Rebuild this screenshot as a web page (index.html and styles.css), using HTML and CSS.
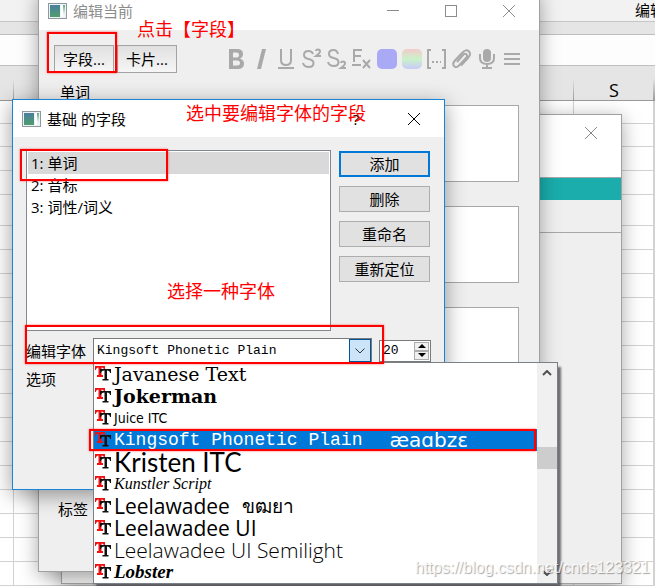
FILE: index.html
```html
<!DOCTYPE html>
<html lang="zh-CN">
<head>
  <meta charset="UTF-8">
  <title>编辑当前</title>
  <link rel="stylesheet" href="styles.css">
</head>
<body>

<svg class="defs" aria-hidden="true">
  <defs>
    <linearGradient id="pic" x1="0" y1="0" x2="0" y2="1">
      <stop offset="0" stop-color="#4a7fa0"/>
      <stop offset="1" stop-color="#4f9d6c"/>
    </linearGradient>
    <linearGradient id="side" x1="0" y1="0" x2="0" y2="1">
      <stop offset="0" stop-color="#5db07a"/>
      <stop offset="1" stop-color="#eef3f8"/>
    </linearGradient>
    <symbol id="app" viewBox="0 0 19 16">
      <rect x="0.5" y="0.5" width="18" height="15" fill="#eef1f5" stroke="#8f979f"/>
      <rect x="2" y="2" width="10" height="12" fill="url(#pic)"/>
      <rect x="13" y="2" width="2" height="12" fill="#fff"/>
      <rect x="15" y="2" width="2" height="9" fill="url(#side)"/>
    </symbol>
    <symbol id="close" viewBox="0 0 12 12">
      <path d="M0 0L12 12M12 0L0 12" fill="none" stroke="currentColor"/>
    </symbol>
    <symbol id="tt" viewBox="0 0 16 16">
      <path d="M0 0H10V4H9Q9 1.500 6.500 1.500V9H8V11H2V9H3.500V1.500Q1 1.500 1 4H0Z" fill="#f01010"/>
      <path d="M5 3H16V7H15Q15 4.500 12 4.500V13H13.500V14.500H7.500V13H9.500V4.500Q6 4.500 6 7H5Z" fill="#111"/>
    </symbol>
  </defs>
</svg>

<main class="desktop">
  <div class="sheet">
    <div class="ribbon">编辑</div>
    <div class="strip"></div>
    <div class="formula"></div>
    <table class="grid">
      <thead>
        <tr><th class="edge"></th><th></th><th></th><th></th><th></th><th></th><th></th><th></th><th>S</th><th class="rest"></th></tr>
      </thead>
      <tbody>
        <tr class="low"><td></td><td></td><td></td><td></td><td></td><td></td><td></td><td></td><td></td><td></td></tr>
        <tr class="low"><td></td><td></td><td></td><td></td><td></td><td></td><td></td><td></td><td></td><td></td></tr>
        <tr><td></td><td></td><td></td><td></td><td></td><td></td><td></td><td></td><td></td><td></td></tr>
        <tr><td></td><td></td><td></td><td></td><td></td><td></td><td></td><td></td><td></td><td></td></tr>
        <tr class="high"><td></td><td></td><td></td><td></td><td></td><td></td><td></td><td></td><td></td><td></td></tr>
        <tr><td></td><td></td><td></td><td></td><td></td><td></td><td></td><td></td><td></td><td></td></tr>
        <tr><td></td><td></td><td></td><td></td><td></td><td></td><td></td><td></td><td></td><td></td></tr>
        <tr><td></td><td></td><td></td><td></td><td></td><td></td><td></td><td></td><td></td><td></td></tr>
        <tr><td></td><td></td><td></td><td></td><td></td><td></td><td></td><td></td><td></td><td></td></tr>
        <tr><td></td><td></td><td></td><td></td><td></td><td></td><td></td><td></td><td></td><td></td></tr>
        <tr><td></td><td></td><td></td><td></td><td></td><td></td><td></td><td></td><td></td><td></td></tr>
        <tr><td></td><td></td><td></td><td></td><td></td><td></td><td></td><td></td><td></td><td></td></tr>
        <tr><td></td><td></td><td></td><td></td><td></td><td></td><td></td><td></td><td></td><td></td></tr>
        <tr><td></td><td></td><td></td><td></td><td></td><td></td><td></td><td></td><td></td><td></td></tr>
        <tr><td></td><td></td><td></td><td></td><td></td><td></td><td></td><td></td><td></td><td></td></tr>
        <tr><td></td><td></td><td></td><td></td><td></td><td></td><td></td><td></td><td></td><td></td></tr>
        <tr><td></td><td></td><td></td><td></td><td></td><td></td><td></td><td></td><td></td><td></td></tr>
        <tr><td></td><td></td><td></td><td></td><td></td><td></td><td></td><td></td><td></td><td></td></tr>
        <tr><td></td><td></td><td></td><td></td><td></td><td></td><td></td><td></td><td></td><td></td></tr>
        <tr><td></td><td></td><td></td><td></td><td></td><td></td><td></td><td></td><td></td><td></td></tr>
      </tbody>
    </table>
  </div>

  <section class="window browser">
    <header class="title">
      <button class="win-btn" type="button" aria-label="关闭"><svg><use href="#close"/></svg></button>
    </header>
    <div class="blank"></div>
    <div class="teal"></div>
    <div class="info"></div>
    <div class="rest-pane"></div>
  </section>

  <section class="window editor">
    <header class="title">
      <svg class="app"><use href="#app"/></svg>
      <h1>编辑当前</h1>
      <button class="win-btn" type="button" aria-label="最小化"><svg viewBox="0 0 12 12"><path d="M0 5.500H12" stroke="currentColor"/></svg></button>
      <button class="win-btn" type="button" aria-label="最大化"><svg viewBox="0 0 12 12"><rect x="0.500" y="0.500" width="11" height="11" fill="none" stroke="currentColor"/></svg></button>
      <button class="win-btn" type="button" aria-label="关闭"><svg><use href="#close"/></svg></button>
    </header>
    <div class="toolbar">
      <button class="flat" type="button">字段...</button>
      <button class="flat" type="button">卡片...</button>
      <div class="tools">
        <button type="button" aria-label="粗体"><svg viewBox="0 0 25 24"><path fill-rule="evenodd" d="M5 2H13Q19 2 19 7Q19 10 16 11.500Q20 13 20 16.500Q20 22 13.500 22H5ZM9 5.500V10.500H12.500Q15 10.500 15 8Q15 5.500 12.500 5.500ZM9 13.500V18.500H13Q16 18.500 16 16Q16 13.500 13 13.500Z" fill="#a9a9a9"/></svg></button>
        <button type="button" aria-label="斜体"><svg viewBox="0 0 25 24"><path d="M13 2H17L12 22H8Z" fill="#a9a9a9"/></svg></button>
        <button type="button" aria-label="下划线"><svg viewBox="0 0 25 24"><path d="M7 2V13Q7 18 12 18Q17 18 17 13V2M4 21H20" class="line"/></svg></button>
        <button type="button" aria-label="上标"><svg viewBox="0 0 25 24"><path d="M14 7Q13 4 9.500 4Q5 4 5 8Q5 11 9.500 12Q14.500 13 14.500 16Q14.500 20 10 20Q5 20 4 16M17 4Q17 2.500 19 2.500Q21 2.500 21 4.500Q21 6 17 9H22" class="line"/></svg></button>
        <button type="button" aria-label="下标"><svg viewBox="0 0 25 24"><path d="M14 7Q13 3 9.500 3Q5 3 5 7Q5 10 9.500 11Q14.500 12 14.500 15Q14.500 19 10 19Q5 19 4 15M17 16Q17 14.500 19 14.500Q21 14.500 21 16.500Q21 18 17 21H22" class="line"/></svg></button>
        <button type="button" aria-label="清除格式"><svg viewBox="0 0 25 24"><path d="M13 3H5V15M5 9H12M3 18H12M14 13L21 21M21 13L14 21" class="line"/></svg></button>
        <button type="button" aria-label="文字颜色"><span class="swatch"></span></button>
        <button type="button" aria-label="更改颜色"><span class="swatch rainbow"></span></button>
        <button type="button" aria-label="填空"><svg viewBox="0 0 25 24"><path d="M7 3H4V21H7M18 3H21V21H18" class="line"/><path d="M8 14h2v2h-2zM12 14h2v2h-2zM16 14h1v2h-1z" fill="#a9a9a9"/></svg></button>
        <button type="button" aria-label="附件"><svg viewBox="0 0 25 24"><path d="M8 15L14 8Q16 6 17.500 7.500Q19 9 17 11L10 18.500Q7 21.500 5 19Q3 17 6 13.500L13 6Q17 1.500 20 4.500Q22.500 7 19 11L12 18.500" class="line"/></svg></button>
        <button type="button" aria-label="录音"><svg viewBox="0 0 25 24"><rect x="9" y="2" width="8" height="13" rx="4" fill="#a9a9a9"/><path d="M6 7V11Q6 17 13 17Q20 17 20 11V7M13 17V21M8 21H18" class="line"/></svg></button>
        <button type="button" aria-label="更多"><svg viewBox="0 0 25 24"><path d="M5 7H21M5 12H21M5 17H21" class="line"/></svg></button>
      </div>
    </div>
    <div class="fields">
      <label for="word">单词</label>
      <textarea id="word"></textarea>
      <textarea aria-label="音标"></textarea>
      <textarea aria-label="词义"></textarea>
      <textarea aria-label="例句"></textarea>
    </div>
    <div class="tags">标签</div>
  </section>

  <section class="window dialog">
    <header class="title">
      <svg class="app"><use href="#app"/></svg>
      <h2>基础 的字段</h2>
      <button class="win-btn" type="button" aria-label="帮助">?</button>
      <button class="win-btn" type="button" aria-label="关闭"><svg><use href="#close"/></svg></button>
    </header>
    <div class="panel">
      <select class="list" size="8" aria-label="字段">
        <option selected>1: 单词</option>
        <option>2: 音标</option>
        <option>3: 词性/词义</option>
      </select>
      <div class="actions">
        <button class="primary" type="button">添加</button>
        <button type="button">删除</button>
        <button type="button">重命名</button>
        <button type="button">重新定位</button>
      </div>
    </div>
    <div class="font-row">
      <label for="font">编辑字体</label>
      <div class="combo">
        <select id="font"><option>Kingsoft Phonetic Plain</option></select>
        <span class="arrow"><svg viewBox="0 0 10 6"><path d="M0.500 0.500L5 5L9.500 0.500" fill="none" stroke="#333"/></svg></span>
      </div>
      <div class="spin">
        <input type="text" value="20" aria-label="字号">
        <div class="steps">
          <button type="button" aria-label="增大"><svg viewBox="0 0 8 4"><path d="M4 0L8 4H0Z"/></svg></button>
          <button type="button" aria-label="减小"><svg viewBox="0 0 8 4"><path d="M0 0H8L4 4Z"/></svg></button>
        </div>
      </div>
    </div>
    <div class="option-row">选项</div>
  </section>

  <div class="popup">
    <ul role="listbox" aria-label="字体">
      <li role="option" class="javanese"><svg><use href="#tt"/></svg>Javanese Text</li>
      <li role="option" class="jokerman"><svg><use href="#tt"/></svg>Jokerman</li>
      <li role="option" class="juice"><svg><use href="#tt"/></svg>Juice ITC</li>
      <li role="option" class="kingsoft" aria-selected="true"><svg><use href="#tt"/></svg>Kingsoft Phonetic Plain<span class="sample">æaɑbzɛ</span></li>
      <li role="option" class="kristen"><svg><use href="#tt"/></svg>Kristen ITC</li>
      <li role="option" class="kunstler"><svg><use href="#tt"/></svg>Kunstler Script</li>
      <li role="option"><svg><use href="#tt"/></svg>Leelawadee<span class="thai">ขฒยา</span></li>
      <li role="option"><svg><use href="#tt"/></svg>Leelawadee UI</li>
      <li role="option" class="light"><svg><use href="#tt"/></svg>Leelawadee UI Semilight</li>
      <li role="option" class="lobster"><svg><use href="#tt"/></svg>Lobster</li>
    </ul>
    <div class="scroll">
      <svg viewBox="0 0 10 6"><path d="M1 5L5 1L9 5" class="chev"/></svg>
      <div class="thumb"></div>
      <svg viewBox="0 0 10 6"><path d="M1 1L5 5L9 1" class="chev"/></svg>
    </div>
  </div>

  <!-- 标注 -->
  <div class="mark mark-fields"></div>
  <div class="mark mark-word"></div>
  <div class="mark mark-font"></div>
  <div class="mark mark-item"></div>
  <p class="note note-click">点击【字段】</p>
  <p class="note note-select">选中要编辑字体的字段</p>
  <p class="note note-choose">选择一种字体</p>
  <p class="watermark">https://blog.csdn.net/cnds123321</p>
</main>

</body>
</html>
```
FILE: styles.css
```css
*{
  box-sizing: border-box;
}
body{
  margin: 0;
  font: 15px/20px "Open Sans", "Noto Sans CJK SC", sans-serif;
  color: #000;
}
h1, h2, p, ul{
  margin: 0;
  padding: 0;
  font-weight: normal;
}
button, select, input, textarea{
  margin: 0;
  padding: 0;
  border: 0;
  border-radius: 0;
  background: none;
  font: inherit;
  color: inherit;
}
.defs{
  position: absolute;
  width: 0;
  height: 0;
}
.desktop{
  position: relative;
  height: 100vh;
  overflow: hidden;
  background: #fff;
}

/* 表格背景 */
.ribbon{
  height: 22px;
  padding-left: 635px;
  background: #f2f2f2;
  border-bottom: 1px solid #c6c6c6;
  white-space: nowrap;
  overflow: hidden;
}
.strip{
  height: 13px;
  background: #e5e5e5;
  border-bottom: 1px solid #bebebe;
}
.formula{
  height: 31px;
  background: #fdfdfd;
  border-bottom: 1px solid #c0c0c0;
}
.grid{
  width: 100%;
  table-layout: fixed;
  border-collapse: separate;
  border-spacing: 0;
}
.grid th{
  width: 80px;
  height: 35px;
  padding: 13px 0 0;
  background: linear-gradient(#e5e5e5, #999) right 12px / 1px 23px no-repeat #e5e5e5;
  border-bottom: 1px solid #999;
  font: 18px/20px "Open Sans", sans-serif;
}
.grid .edge{
  width: 14px;
}
.grid .rest{
  width: auto;
}
.grid td{
  height: 24px;
  padding: 0;
  border-right: 1px solid #d2d2d2;
  border-bottom: 1px solid #d2d2d2;
}
.grid .low td{
  height: 23px;
}
.grid .high td{
  height: 31px;
}

/* 窗口 */
.window{
  position: absolute;
  display: flex;
  flex-direction: column;
  background: #efefef;
  border: 1px solid #a0a0a0;
  box-shadow: 0 4px 18px rgba(0,0,0,.35);
}
.title{
  display: flex;
  align-items: center;
  height: 38px;
  padding: 0 1px 0 9px;
  background: #fff;
}
.title h1, .title h2{
  margin-left: 6px;
  font-size: 15px;
}
.app{
  width: 19px;
  height: 16px;
}
.win-btn{
  width: 58px;
  height: 36px;
  display: flex;
  align-items: center;
  justify-content: center;
}
.win-btn:first-of-type{
  margin-left: auto;
}
.win-btn svg{
  width: 12px;
  height: 12px;
}
.browser{
  left: 61px;
  top: 114px;
  width: 561px;
}
.browser .title{
  height: 36px;
  color: #888;
}
.blank{
  height: 27px;
  background: #fff;
  border-bottom: 1px solid #a8a8a8;
}
.teal{
  height: 22px;
  background: #1aadac;
}
.info{
  height: 33px;
  border-bottom: 1px solid #a8a8a8;
}
.rest-pane{
  height: 350px;
}
.editor{
  left: 38px;
  top: -9px;
  width: 502px;
}
.editor .title{
  color: #8c8c8c;
}

.toolbar{
  display: flex;
  align-items: center;
  gap: 3px;
  padding: 15px 15px 9px;
}
.flat{
  width: 60px;
  height: 28px;
  border: 1px solid #a3a3a3;
  background: linear-gradient(#e0e0e0, #f6f6f6);
}
.tools{
  display: flex;
  margin-left: auto;
}
.tools button{
  display: flex;
  align-items: center;
  justify-content: center;
  width: 25px;
  height: 26px;
}
.tools svg{
  width: 25px;
  height: 24px;
}
.line{
  fill: none;
  stroke: #a9a9a9;
  stroke-width: 2;
}
.swatch{
  width: 20px;
  height: 20px;
  border-radius: 5px;
  background: #a9a9f5;
}
.rainbow{
  background: linear-gradient(#f5caca, #caf2ca 50%, #cacaf8);
}
.fields{
  display: flex;
  flex-direction: column;
  padding: 0 20px 4px 21px;
}
.fields label{
  height: 23px;
}
.fields textarea{
  height: 77px;
  border: 1px solid #a8a8a8;
  background: #fff;
  resize: none;
}
.fields textarea + textarea{
  margin-top: 24px;
}
.tags{
  margin: 0 12px;
  padding: 9px 7px 52px;
  border-top: 1px solid #a0a0a0;
}

.dialog{
  left: 12px;
  top: 99px;
  width: 433px;
  border-color: #1883d7;
  box-shadow: 0 5px 20px rgba(0,0,0,.4);
}
.dialog .title{
  height: 37px;
}
.panel{
  display: flex;
  gap: 8px;
  padding: 13px 14px 0 13px;
}
.list{
  flex: 1;
  height: 181px;
  padding: 1px;
  border: 1px solid #828790;
  background: #fff;
  overflow: hidden;
}
.list option{
  min-height: 22px;
  padding: 0 3px;
  line-height: 22px;
}
.list option:checked{
  background: linear-gradient(#d9d9d9, #d9d9d9);
  color: #000;
}
.actions{
  display: flex;
  flex-direction: column;
  gap: 9px;
  width: 91px;
  padding-top: 1px;
}
.actions button{
  height: 26px;
  border: 1px solid #adadad;
  background: #e1e1e1;
}
.actions .primary{
  border: 2px solid #0078d7;
}
.font-row{
  display: flex;
  align-items: center;
  gap: 7px;
  padding: 7px 13px 0;
}
.combo{
  display: flex;
  flex: 1;
  height: 25px;
  border: 1px solid #7a7a7a;
  background: #fff;
}
.combo select{
  flex: 1;
  min-width: 0;
  padding-left: 3px;
  appearance: none;
  font: 13px/20px "Liberation Mono", monospace;
}
.arrow{
  display: flex;
  align-items: center;
  justify-content: center;
  width: 22px;
  border: 1px solid #005499;
  background: #cce4f7;
}
.arrow svg{
  width: 10px;
  height: 6px;
}
.spin{
  display: flex;
  width: 52px;
  height: 22px;
  padding: 1px;
  border: 1px solid #7a7a7a;
  background: #fff;
}
.spin input{
  flex: 1;
  min-width: 0;
  padding-left: 2px;
  font: 13px/18px "Liberation Mono", monospace;
}
.steps{
  display: flex;
  flex-direction: column;
  width: 15px;
}
.steps button{
  display: flex;
  flex: 1;
  align-items: center;
  justify-content: center;
  border: 1px solid #adadad;
  background: #f0f0f0;
}
.steps svg{
  width: 8px;
  height: 4px;
}
.option-row{
  padding: 6px 13px 100px;
}

/* 字体下拉列表 */
.popup{
  position: absolute;
  left: 93px;
  top: 362px;
  width: 465px;
  display: flex;
  border: 1px solid #7a8088;
  background: #fff;
  box-shadow: 3px 5px 2px rgba(70,70,75,.75);
}
.popup ul{
  flex: 1;
  list-style: none;
}
.popup li{
  display: flex;
  align-items: center;
  height: 22px;
  padding-left: 1px;
  font: 21px/22px "Open Sans", "Noto Sans", sans-serif;
  white-space: nowrap;
}
.popup li svg{
  width: 16px;
  height: 16px;
  margin-right: 3px;
}
.popup .javanese{
  font: 19px/22px "DejaVu Serif", serif;
}
.popup .jokerman{
  font: bold 19px/22px "DejaVu Serif", serif;
}
.popup .juice{
  font: 14px/22px "Liberation Sans Narrow", "DejaVu Sans Condensed", sans-serif;
}
.popup .kingsoft{
  background: #0078d7;
  color: #fff;
  font: 18px/22px "Liberation Mono", monospace;
}
.popup .kristen{
  font: 26px/22px "Lato", sans-serif;
}
.popup .kunstler{
  font: italic 16px/22px "Liberation Serif", serif;
}
.popup .light{
  font-weight: 300;
}
.popup .lobster{
  font: italic bold 19px/22px "Liberation Serif", serif;
}
.sample{
  margin-left: 27px;
  font: 20px/22px "DejaVu Sans", sans-serif;
}
.thai{
  margin-left: 12px;
  font-size: 19px;
}
.scroll{
  display: flex;
  flex-direction: column;
  align-items: center;
  justify-content: space-between;
  width: 20px;
  padding: 7px 0;
  background: #f0f0f0;
}
.scroll svg{
  width: 10px;
  height: 6px;
}
.chev{
  fill: none;
  stroke: #505050;
  stroke-width: 2;
}
.thumb{
  width: 20px;
  height: 22px;
  margin-top: -30px;
  background: #cdcdcd;
}

/* 红框和说明文字 */
.mark{
  position: absolute;
  border: 2px solid #f00;
  box-shadow: 0 0 2px rgba(255,0,0,.6);
}
.mark-fields{
  left: 47px;
  top: 32px;
  width: 70px;
  height: 41px;
}
.mark-word{
  left: 20px;
  top: 149px;
  width: 148px;
  height: 32px;
}
.mark-font{
  left: 25px;
  top: 325px;
  width: 359px;
  height: 39px;
}
.mark-item{
  left: 89px;
  top: 429px;
  width: 447px;
  height: 22px;
}
.note{
  position: absolute;
  color: #f00;
  font: 18px/24px "Noto Sans CJK SC", sans-serif;
  white-space: nowrap;
}
.note-click{
  left: 137px;
  top: 16px;
}
.note-select{
  left: 186px;
  top: 100px;
}
.note-choose{
  left: 167px;
  top: 278px;
}
.watermark{
  position: absolute;
  left: 415px;
  top: 558px;
  color: rgba(255,255,255,.85);
  font: 16px/20px "Liberation Sans", sans-serif;
  text-shadow: 1px 1px 1px rgba(0,0,0,.35);
}
```
